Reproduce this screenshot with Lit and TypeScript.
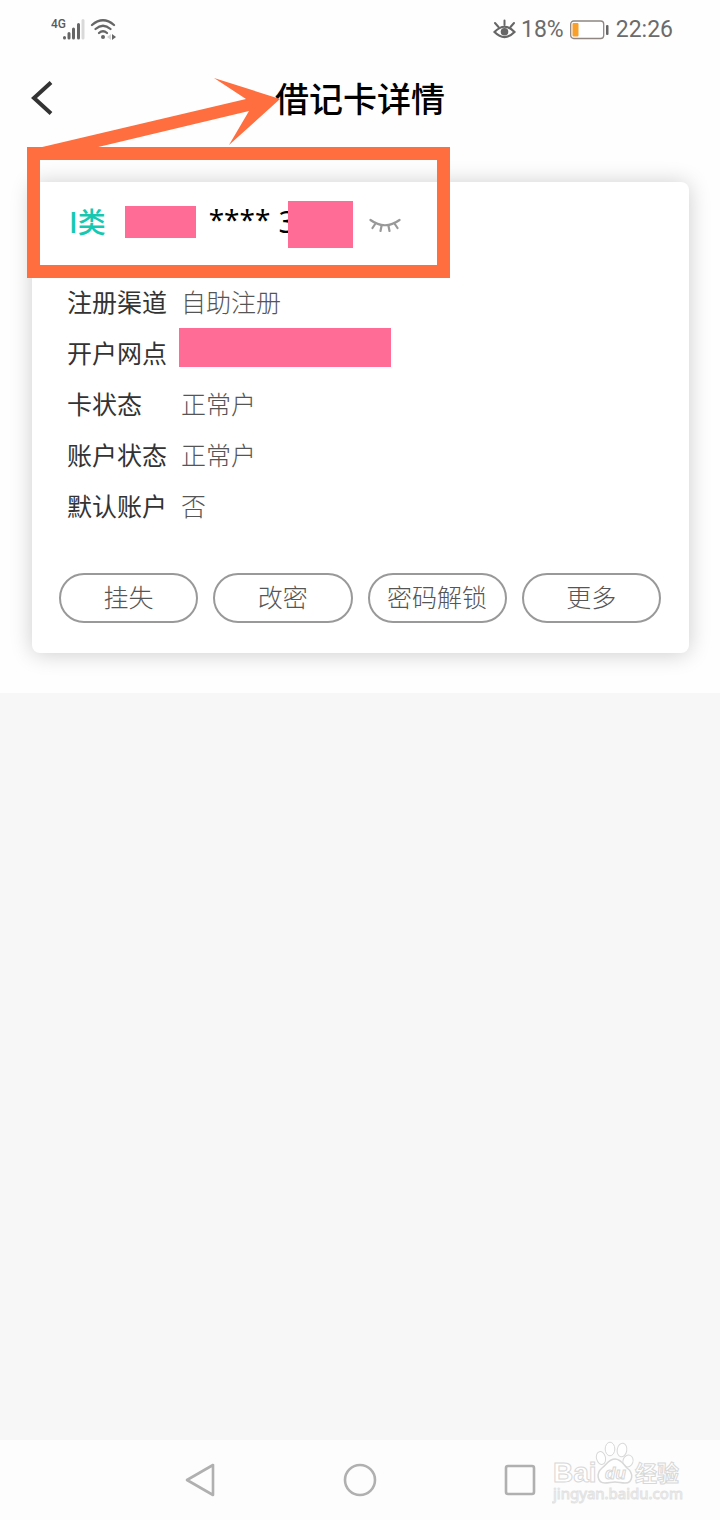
import { LitElement, html, css } from "lit";
import { customElement, state } from "lit/decorators.js";

const FONT = css`"Roboto", "Noto Sans CJK SC", sans-serif`;
const CJK = css`"Noto Sans CJK SC", sans-serif`;

@customElement("status-bar")
class StatusBar extends LitElement {
  static styles = css`
    :host {
      display: flex;
      justify-content: space-between;
      align-items: center;
      height: 56px;
      padding: 2px 47px 0 51px;
      font-family: ${FONT};
      font-size: 23px;
      line-height: 28px;
      color: #6b6b6b;
    }
    .group {
      display: flex;
      align-items: center;
    }
    .right {
      gap: 5px;
    }
    svg {
      display: block;
    }
  `;

  render() {
    return html`
      <div class="group">
        <svg width="66" height="28" viewBox="0 0 66 28" role="img" aria-label="4G, Wi-Fi">
          <text x="0" y="12" font-size="12" font-weight="500" fill="#5a5a5a" font-family="Roboto, sans-serif">4G</text>
          <g stroke-width="3" stroke-linecap="round" stroke="#666">
            <path d="M13.500 21.500v.5M18 17.500v4.500M22.500 13v9M27.500 8.500v13.500" />
            <path d="M32 4.500v17.500" stroke="#d9d9d9" />
          </g>
          <g fill="none" stroke="#666" stroke-width="2.300" stroke-linecap="round">
            <path d="M41 9Q52 -0.500 63 9" />
            <path d="M44.500 13Q52 6.500 59.500 13" />
            <path d="M48 17Q52 13.500 56 17" />
          </g>
          <circle cx="52" cy="21" r="2" fill="#666" />
          <path d="M61 18l4 3-4 3z" fill="#666" />
          <path d="M60 18l-4 3 4 3z" fill="#d4d4d4" />
        </svg>
      </div>
      <div class="group right">
        <svg width="23" height="22" viewBox="0 0 23 22" aria-hidden="true">
          <path d="M1.500 13Q11.500 2.500 21.500 13Q11.500 23 1.500 13Z" fill="none" stroke="#666" stroke-width="2.200" />
          <circle cx="11.500" cy="12.800" r="3.800" fill="#666" />
          <path d="M11.500 6V1.500M5.500 8L2 4M17.500 8L21 4" stroke="#666" stroke-width="2" stroke-linecap="round" />
        </svg>
        <span>18%</span>
        <svg width="42" height="20" viewBox="0 0 42 20" role="img" aria-label="电池">
          <rect x="1.700" y="1" width="33" height="17.500" rx="3" fill="#fff" stroke="#8f8682" stroke-width="1.300" />
          <rect x="3.500" y="3" width="6" height="13.500" rx="1" fill="#f9a02a" />
          <rect x="37" y="5" width="2.500" height="10" rx="1" fill="#666" />
        </svg>
        <span>22:26</span>
      </div>
    `;
  }
}

interface Detail {
  label: string;
  value?: string;
}

@customElement("card-detail")
class CardDetail extends LitElement {
  static styles = css`
    :host {
      display: block;
      margin: 0 31px 0 32px;
      padding: 12px 28px 30px 27px;
      border-radius: 8px;
      background: #fff;
      box-shadow: 0 1px 22px rgba(0, 0, 0, 0.2);
      font-family: ${CJK};
      font-size: 25px;
    }
    .number {
      display: flex;
      align-items: center;
      height: 56px;
      margin-bottom: 25px;
      padding-left: 10px;
      font-size: 28px;
      line-height: 36px;
      color: #000;
    }
    .kind {
      padding-bottom: 2px;
      font-weight: 500;
      color: #16c8b2;
    }
    .digits {
      font-family: "Noto Sans", sans-serif;
      font-size: 30px;
    }
    .stars {
      margin: 0 8px 0 13px;
      padding-bottom: 6px;
      font-family: "Noto Sans", sans-serif;
    }
    .mask {
      position: relative;
      background: #ff6d96;
    }
    .mask-head {
      width: 71px;
      height: 32px;
      margin-left: 19px;
    }
    .mask-tail {
      width: 65px;
      height: 47px;
      margin: 4px 0 0 -8px;
    }
    .mask-branch {
      display: block;
      width: 212px;
      height: 39px;
      margin: -8px 0 0 -2px;
    }
    .eye {
      display: block;
      margin: 8px 0 0 16px;
      padding: 0;
      border: 0;
      background: none;
    }
    svg {
      display: block;
    }
    dl {
      margin: 0 0 43px;
      padding-left: 8px;
    }
    .row {
      display: grid;
      grid-template-columns: 114px 1fr;
      align-items: center;
      height: 51px;
      line-height: 36px;
    }
    dt {
      color: #333;
    }
    dd {
      margin: 0;
      font-weight: 300;
      color: #555;
    }
    .actions {
      display: flex;
      gap: 15px;
    }
    .action {
      flex: 1 1 0;
      height: 50px;
      padding: 0 0 4px;
      border: 2px solid #999;
      border-radius: 25px;
      background: #fff;
      font-family: ${CJK};
      font-size: 25px;
      font-weight: 300;
      line-height: 36px;
      color: #555;
      white-space: nowrap;
    }
  `;

  @state() private details: Detail[] = [
    { label: "注册渠道", value: "自助注册" },
    { label: "开户网点" },
    { label: "卡状态", value: "正常户" },
    { label: "账户状态", value: "正常户" },
    { label: "默认账户", value: "否" },
  ];

  private actions = ["挂失", "改密", "密码解锁", "更多"];

  render() {
    return html`
      <div class="number">
        <span class="kind">I类</span>
        <span class="mask mask-head"></span>
        <span class="stars">****</span>
        <span class="digits">3</span>
        <span class="mask mask-tail"></span>
        <button class="eye" type="button" aria-label="显示卡号">
          <svg width="32" height="16" viewBox="0 0 32 16" fill="none" stroke="#999" stroke-width="2.200" stroke-linecap="round">
            <path d="M1.500 2Q16 12.500 30.500 2M6.500 5.500L3.500 10M12.500 8L11.500 13M19.500 8L20.500 13M25.500 5.500L28.500 10" />
          </svg>
        </button>
      </div>
      <dl>
        ${this.details.map(
          (d) => html`
            <div class="row">
              <dt>${d.label}</dt>
              <dd>${d.value ?? html`<span class="mask mask-branch"></span>`}</dd>
            </div>
          `
        )}
      </dl>
      <div class="actions">
        ${this.actions.map((a) => html`<button class="action" type="button">${a}</button>`)}
      </div>
    `;
  }
}

@customElement("nav-bar")
class NavBar extends LitElement {
  static styles = css`
    :host {
      position: relative;
      display: grid;
      grid-template-columns: repeat(3, 160px);
      justify-content: center;
      height: 80px;
      background: #fdfdfd;
    }
    .key {
      display: grid;
      place-items: center;
      padding: 0;
      border: 0;
      background: none;
    }
    .watermark {
      position: absolute;
      right: 34px;
      bottom: 12px;
    }
  `;

  private keys = [
    { label: "返回", d: "M5 18L31 3V33Z" },
    { label: "主页", d: "M18 3A15 15 0 0 1 18 33A15 15 0 0 1 18 3Z" },
    { label: "最近任务", d: "M6 4H30A2 2 0 0 1 32 6V30A2 2 0 0 1 30 32H6A2 2 0 0 1 4 30V6A2 2 0 0 1 6 4Z" },
  ];

  render() {
    return html`
      ${this.keys.map(
        (k) => html`
          <button class="key" type="button" aria-label=${k.label}>
            <svg width="36" height="36" viewBox="0 0 36 36" fill="none" stroke="#b0b0b0" stroke-width="2.600" stroke-linejoin="round">
              <path d=${k.d} />
            </svg>
          </button>
        `
      )}
      <svg class="watermark" width="134" height="68" viewBox="0 0 134 68" fill="#fff" stroke="#d8d8d8" stroke-width="1">
        <text x="1" y="42" font-size="28" font-weight="700" font-family="Liberation Sans, sans-serif">Bai</text>
        <ellipse cx="49" cy="18" rx="4.500" ry="6.500" transform="rotate(-15 49 18)" />
        <ellipse cx="58" cy="9" rx="4.800" ry="6.800" />
        <ellipse cx="70" cy="10" rx="4.800" ry="6.800" transform="rotate(10 70 10)" />
        <ellipse cx="76" cy="21" rx="5" ry="6" transform="rotate(20 76 21)" />
        <path stroke-width="1.500" d="M63 19C69 19 71 24 75 28C82 33 81 43 73 43C69 43 67 42 63 42C59 42 57 43 53 43C45 43 44 33 50 28C55 24 57 19 63 19Z" />
        <text x="53" y="39" font-size="17" font-weight="700" font-style="italic" font-family="Liberation Sans, sans-serif">du</text>
        <text x="83" y="41" font-size="22" font-weight="700" font-family="Noto Sans CJK SC, sans-serif">经验</text>
        <text x="1" y="59" font-size="15" font-family="Noto Sans, sans-serif" stroke="#e2e2e2">jingyan.baidu.com</text>
      </svg>
    `;
  }
}

@customElement("app-root")
class AppRoot extends LitElement {
  static styles = css`
    :host {
      position: relative;
      display: flex;
      flex-direction: column;
      min-height: 100vh;
      overflow: hidden;
      background: #f7f7f7;
      font-family: ${FONT};
    }
    .sheet {
      padding-bottom: 40px;
      background: #fefefe;
    }
    .title-bar {
      display: grid;
      grid-template-columns: 60px 1fr 60px;
      align-items: center;
      height: 80px;
      margin-bottom: 44px;
      padding: 0 12px;
    }
    .back {
      display: grid;
      place-items: center;
      height: 60px;
      padding: 0;
      border: 0;
      background: none;
    }
    h1 {
      margin: 0;
      font-family: ${CJK};
      font-size: 34px;
      font-weight: 500;
      line-height: 48px;
      text-align: center;
      color: #000;
    }
    .rest {
      display: flex;
      flex: 1;
      padding-top: 20px;
    }
    .edge {
      width: 3px;
      height: 62%;
      background: #fdfdfd;
    }
    .callout {
      position: absolute;
      top: 70px;
      left: 20px;
      pointer-events: none;
    }
  `;

  render() {
    return html`
      <main class="sheet">
        <status-bar></status-bar>
        <header class="title-bar">
          <button class="back" type="button" aria-label="返回">
            <svg width="26" height="34" viewBox="0 0 26 34" fill="none" stroke="#333" stroke-width="4">
              <path d="M22 1.500L5 17L22 32.500" />
            </svg>
          </button>
          <h1>借记卡详情</h1>
        </header>
        <card-detail></card-detail>
      </main>
      <div class="rest"><div class="edge"></div></div>
      <nav-bar></nav-bar>
      <svg class="callout" width="440" height="214" viewBox="20 70 440 214" aria-hidden="true">
        <rect x="33.500" y="153.500" width="410" height="118" fill="none" stroke="#ff6e3e" stroke-width="13" />
        <path d="M38 148L246 99L214 78L280 99L229 145L249 111L94 148Z" fill="#ff6e3e" />
      </svg>
    `;
  }
}
